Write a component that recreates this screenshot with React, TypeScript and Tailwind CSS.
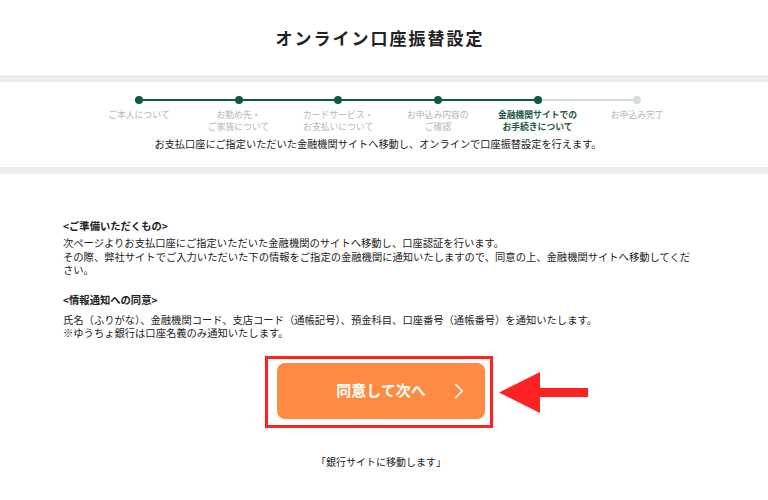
import { ChevronRight } from "lucide-react";

const steps = [
  ["ご本人について"],
  ["お勤め先・", "ご家族について"],
  ["カードサービス・", "お支払いについて"],
  ["お申込み内容の", "ご確認"],
  ["金融機関サイトでの", "お手続きについて"],
  ["お申込み完了"],
];

const ACTIVE = 4;

function Stepper() {
  return (
    <div className="ml-[89px] grid w-[598px] grid-cols-6">
      {steps.map((lines, i) => {
        const done = i <= ACTIVE;
        return (
          <div key={i} className="flex flex-col items-center">
            <div className="flex h-[8px] w-full items-center">
              <div
                className={
                  i === 0
                    ? "h-[2px] flex-1"
                    : done
                    ? "h-[2px] flex-1 bg-[#0d5a3c]"
                    : "h-[2px] flex-1 bg-[#d6dedb]"
                }
              />
              <div
                className={
                  done
                    ? "h-[8px] w-[8px] shrink-0 rounded-full bg-[#0d5a3c]"
                    : "h-[8px] w-[8px] shrink-0 rounded-full bg-[#d6dedb]"
                }
              />
              <div
                className={
                  i === steps.length - 1
                    ? "h-[2px] flex-1"
                    : i < ACTIVE
                    ? "h-[2px] flex-1 bg-[#0d5a3c]"
                    : "h-[2px] flex-1 bg-[#d6dedb]"
                }
              />
            </div>
            <div
              className={
                i === ACTIVE
                  ? "mt-[5px] text-center text-[8.8px] leading-[12px] font-bold text-[#1d5a3e]"
                  : "mt-[5px] text-center text-[8.8px] leading-[12px] text-[#b5b5b5]"
              }
            >
              {lines.map((l) => (
                <div key={l}>{l}</div>
              ))}
            </div>
          </div>
        );
      })}
    </div>
  );
}

export default function App() {
  return (
    <div
      className="min-h-[500px] bg-white text-[#222]"
      style={{ fontFamily: '"Noto Sans CJK JP", "Noto Sans", sans-serif' }}
    >
      {/* タイトル */}
      <div className="flex h-[75px] items-center justify-center pr-[8px]">
        <h1 className="text-[17px] font-bold tracking-[2px] text-[#222]">
          オンライン口座振替設定
        </h1>
      </div>

      <div className="h-[7px] bg-[#eeeeee]" />

      {/* ステップ */}
      <div className="h-[85px] pt-[14px]">
        <Stepper />
        <p className="mt-[4px] pr-[12px] text-center text-[10.2px] leading-[14px] text-[#222]">
          お支払口座にご指定いただいた金融機関サイトへ移動し、オンラインで口座振替設定を行えます。
        </p>
      </div>

      <div className="h-[7px] bg-[#eeeeee]" />

      {/* 説明 */}
      <div className="ml-[63px] w-[632px] pt-[45px] text-[10.3px] leading-[13.5px] text-[#222]">
        <h2 className="font-bold leading-[14px]">&lt;ご準備いただくもの&gt;</h2>
        <p className="mt-[3px]">
          次ページよりお支払口座にご指定いただいた金融機関のサイトへ移動し、口座認証を行います。
          <br />
          その際、弊社サイトでご入力いただいた下の情報をご指定の金融機関に通知いたしますので、同意の上、金融機関サイトへ移動してください。
        </p>
        <h2 className="mt-[16px] font-bold leading-[14px]">&lt;情報通知への同意&gt;</h2>
        <p className="mt-[6px]">
          氏名（ふりがな）、金融機関コード、支店コード（通帳記号）、預金科目、口座番号（通帳番号）を通知いたします。
          <br />
          ※ゆうちょ銀行は口座名義のみ通知いたします。
        </p>
      </div>

      {/* ボタン */}
      <div className="mt-[23px] flex justify-center pr-[6px]">
        <div className="relative">
          <button
            type="button"
            className="relative flex h-[56px] w-[208px] items-center justify-center rounded-[8px] bg-[#ff8b42] text-[15px] font-bold text-white"
          >
            同意して次へ
            <ChevronRight
              className="absolute right-[13px] top-1/2 h-[26px] w-[26px] -translate-y-1/2"
              strokeWidth={1.6}
            />
          </button>
          {/* 注記用の赤枠と矢印 */}
          <div className="pointer-events-none absolute -left-[12px] -right-[8px] -top-[7px] -bottom-[9px] border-[3px] border-[#ff2222]" />
          <svg
            className="absolute left-[222px] top-[9px]"
            width="89"
            height="41"
            viewBox="0 0 89 41"
          >
            <polygon
              points="0,20.5 41,0 41,16 89,16 89,25 41,25 41,41"
              fill="#ff2222"
            />
          </svg>
        </div>
      </div>

      <p className="mt-[36px] pr-[6px] text-center text-[10px] leading-[14px] text-[#222]">
        「銀行サイトに移動します」
      </p>
    </div>
  );
}
